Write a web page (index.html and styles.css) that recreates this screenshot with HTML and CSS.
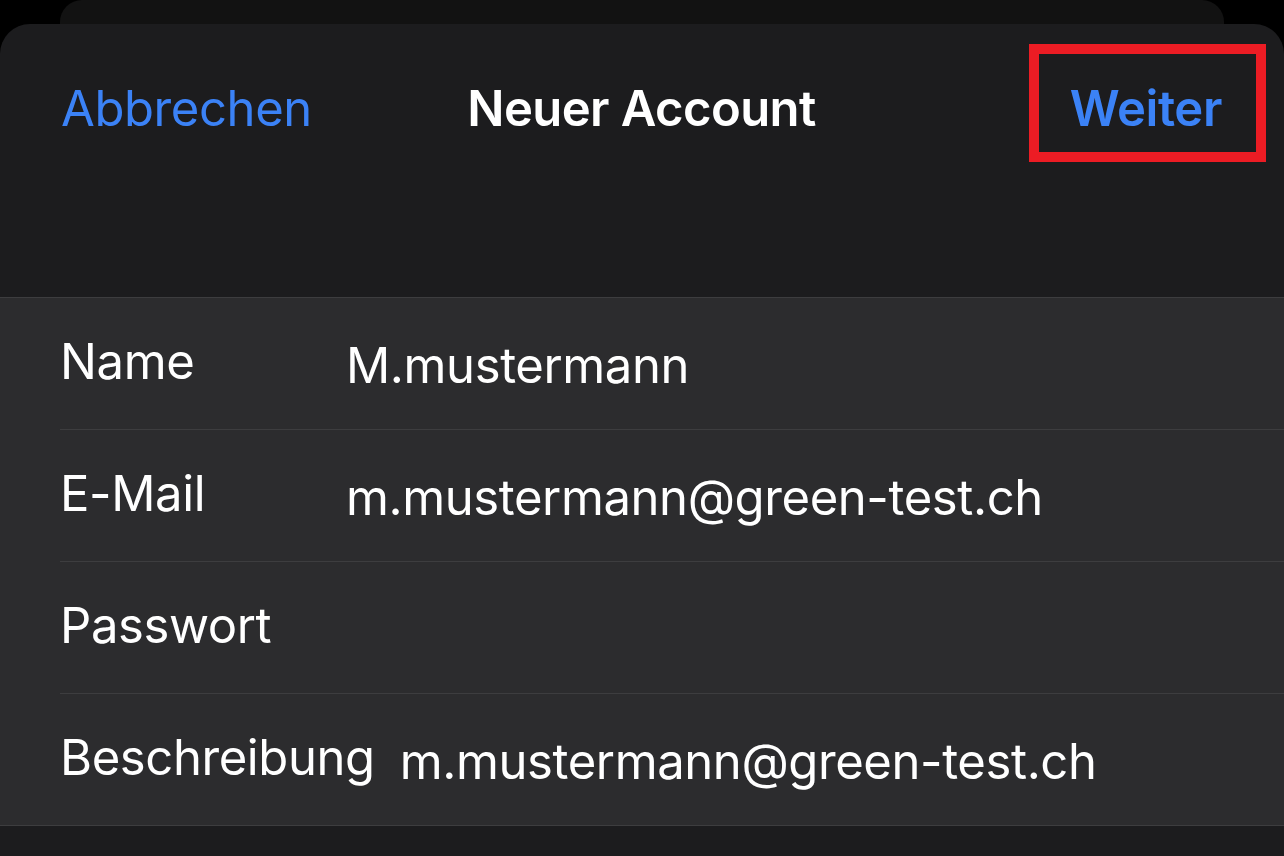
FILE: index.html
```html
<!DOCTYPE html>
<html lang="de">
<head>
<meta charset="utf-8">
<title>Neuer Account</title>
<link rel="stylesheet" href="styles.css">
</head>
<body>
<div class="screen">
  <div class="back-card"></div>
  <div class="sheet">
    <header class="nav">
      <span class="nav-cancel">Abbrechen</span>
      <span class="nav-title">Neuer Account</span>
      <span class="nav-next"><span class="nav-next-label">Weiter</span></span>
    </header>
    <section class="group">
      <div class="row">
        <span class="label">Name</span>
        <span class="value">M.mustermann</span>
      </div>
      <div class="row">
        <span class="label">E-Mail</span>
        <span class="value">m.mustermann@green-test.ch</span>
      </div>
      <div class="row">
        <span class="label">Passwort</span>
        <span class="value"></span>
      </div>
      <div class="row last">
        <span class="label">Beschreibung</span>
        <span class="value">m.mustermann@green-test.ch</span>
      </div>
    </section>
  </div>
</div>
</body>
</html>
```
FILE: styles.css
```css
* { box-sizing: border-box; }
html, body {
  margin: 0;
  padding: 0;
  background: #000;
  width: 1284px;
  height: 856px;
  overflow: hidden;
  font-family: Inter, "Noto Sans", "Liberation Sans", sans-serif;
  -webkit-font-smoothing: antialiased;
}
.screen {
  display: flex;
  flex-direction: column;
  height: 856px;
}
.back-card {
  flex: 0 0 24px;
  margin: 0 60px;
  background: #121212;
  border-radius: 22px 22px 0 0;
}
.sheet {
  flex: 1 1 auto;
  background: #1c1c1e;
  border-radius: 30px 30px 0 0;
  display: flex;
  flex-direction: column;
}
.nav {
  height: 273px;
  display: grid;
  grid-template-columns: 1fr auto 1fr;
  align-items: start;
  padding: 55px 62px 0 61px;
  font-size: 49px;
  line-height: 60px;
  letter-spacing: -0.4px;
}
.nav-cancel {
  color: #3b82f6;
  justify-self: start;
}
.nav-title {
  color: #fff;
  font-weight: 600;
  justify-self: center;
  letter-spacing: -0.6px;
}
.nav-next {
  justify-self: end;
  position: relative;
  color: #3b82f6;
  font-weight: 600;
}
.nav-next::after {
  content: "";
  position: absolute;
  left: -41px;
  right: -44px;
  top: -35px;
  bottom: -23px;
  border: 10px solid #ec1c24;
}
.group {
  background: #2c2c2e;
  border-top: 1px solid #3d3d3f;
  border-bottom: 1px solid #3d3d3f;
}
.row {
  height: 132px;
  margin-left: 60px;
  border-bottom: 1px solid #3d3d3f;
  display: flex;
  align-items: center;
  color: #fff;
  font-size: 49px;
  line-height: 60px;
  letter-spacing: -0.4px;
}
.row.last {
  height: 131px;
  border-bottom: none;
}
.label {
  flex: 0 0 auto;
  min-width: 261px;
  margin-right: 25px;
  padding-bottom: 4px;
}
.value {
  flex: 1 1 auto;
  white-space: nowrap;
  padding-top: 4px;
}
```
